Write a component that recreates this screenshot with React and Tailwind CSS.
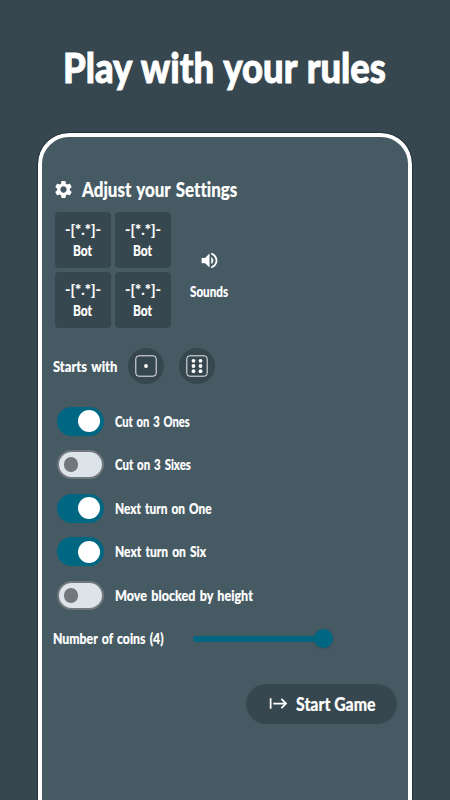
import { useLayoutEffect, useRef, useState } from "react";
import { MdSettings, MdVolumeUp, MdStart } from "react-icons/md";

// Condenses a line of text horizontally so that it fills exactly `width` pixels.
function Label({ children, width, className = "" }) {
  const ref = useRef(null);
  const [scale, setScale] = useState(1);
  useLayoutEffect(() => {
    setScale(width / ref.current.offsetWidth);
  }, [width, children]);
  return (
    <span className="flex shrink-0 whitespace-nowrap" style={{ width }}>
      <span
        ref={ref}
        className={`block shrink-0 origin-left leading-none ${className}`}
        style={{ transform: `scaleX(${scale})` }}
      >
        {children}
      </span>
    </span>
  );
}

function Player() {
  return (
    <div className="flex h-14 w-14 flex-col items-center rounded bg-[#37474f] pt-[10px]">
      <Label width={36} className="text-[15px] font-bold">-[*.*]-</Label>
      <div className="mt-[6px]">
        <Label width={19} className="text-[15px]">Bot</Label>
      </div>
    </div>
  );
}

function Die({ children }) {
  return (
    <div className="flex h-9 w-9 items-center justify-center rounded-full bg-[#37474f]">
      <svg width="22" height="22" viewBox="0 0 22 22" fill="white">
        <rect x="0.8" y="0.8" width="20.4" height="20.4" rx="3" fill="none" stroke="white" strokeWidth="0.9" />
        {children}
      </svg>
    </div>
  );
}

function Toggle({ on }) {
  return on ? (
    <div className="flex h-[29px] w-[47px] items-center justify-end rounded-full bg-[#006783] pr-[3.5px]">
      <div className="h-[22px] w-[22px] rounded-full bg-white" />
    </div>
  ) : (
    <div className="flex h-[29px] w-[47px] items-center rounded-full border-2 border-[#70787d] bg-[#dce4e9] pl-[5px]">
      <div className="h-[14.5px] w-[14.5px] rounded-full bg-[#70787d]" />
    </div>
  );
}

const rules = [
  ["Cut on 3 Ones", true, 75],
  ["Cut on 3 Sixes", false, 76],
  ["Next turn on One", true, 97],
  ["Next turn on Six", true, 91],
  ["Move blocked by height", false, 138],
];

export default function App() {
  return (
    <div className="flex h-[800px] w-[450px] flex-col overflow-hidden bg-[#37474f] font-['Lato',sans-serif] font-black text-white [font-variant-ligatures:none] [word-spacing:0.1em] [-webkit-text-stroke:0.15px_white]">
      <h1 className="flex h-[133px] shrink-0 pt-[47px] pl-[63px]">
        <Label width={323} className="text-[41px] [-webkit-text-stroke:0.9px_white]">Play with your rules</Label>
      </h1>
      <main className="mx-[38px] flex h-[720px] shrink-0 flex-col rounded-t-[31px] border-4 border-white bg-[#465a64] pt-[40px] outline outline-1 outline-[#24333c]">
        <div className="flex h-6 items-center pl-[11px]">
          <MdSettings size={21} />
          <div className="ml-2">
            <Label width={155} className="text-[20px]">Adjust your Settings</Label>
          </div>
        </div>
        <div className="mt-[11px] flex pl-[12.5px]">
          <div className="grid grid-cols-[56px_56px] gap-1">
            <Player />
            <Player />
            <Player />
            <Player />
          </div>
          <div className="ml-[19.5px] flex flex-col items-center pt-[38px]">
            <MdVolumeUp size={21} />
            <div className="mt-[13px]">
              <Label width={38} className="text-[15px]">Sounds</Label>
            </div>
          </div>
        </div>
        <div className="mt-5 flex h-9 items-center pl-[11px]">
          <Label width={64} className="text-[15px]">Starts with</Label>
          <div className="ml-[11px] flex gap-[15px]">
            <Die>
              <circle cx="11" cy="11" r="1.9" />
            </Die>
            <Die>
              {[5.8, 11, 16.2].map((y) => (
                <g key={y}>
                  <circle cx="7.5" cy={y} r="1.9" />
                  <circle cx="14.5" cy={y} r="1.9" />
                </g>
              ))}
            </Die>
          </div>
        </div>
        <div className="mt-[22.5px] flex flex-col gap-[14.6px] pl-[14.5px]">
          {rules.map(([text, on, width]) => (
            <div key={text} className="flex h-[29px] items-center gap-[11px]">
              <Toggle on={on} />
              <Label width={width} className="text-[15px]">{text}</Label>
            </div>
          ))}
        </div>
        <div className="mt-[19px] flex h-5 items-center pl-[11px]">
          <Label width={111} className="text-[15px]">Number of coins (4)</Label>
          <div className="ml-[29px] flex w-[140px] items-center">
            <div className="h-[6px] w-[122px] rounded-l-full bg-[#006783]" />
            <div className="-ml-px h-[19px] w-[19px] rounded-full bg-[#006783] shadow-sm" />
          </div>
        </div>
        <button className="mt-[35px] mr-[11px] flex h-10 w-[151px] items-center self-end rounded-full bg-[#37474f] pl-[22px]">
          <MdStart size={21} />
          <span className="ml-[7px]">
            <Label width={80} className="text-[19px]">Start Game</Label>
          </span>
        </button>
      </main>
    </div>
  );
}
